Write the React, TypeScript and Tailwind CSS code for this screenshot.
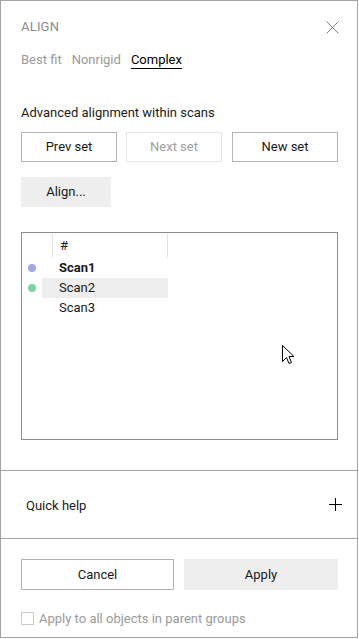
const scans = [
  { name: "Scan1", dot: "bg-[#9fa8e6]", bold: true, selected: false },
  { name: "Scan2", dot: "bg-[#7fd1a6]", bold: false, selected: true },
  { name: "Scan3", dot: "", bold: false, selected: false },
];

function Cursor() {
  return (
    <svg width="13" height="20" viewBox="0 0 13 20" className="absolute left-[260px] top-[112px]">
      <path
        d="M0.5 0.5 L0.5 16.5 L4.5 12.5 L7 18.5 L9.5 17.5 L7 11.5 L12 11.5 Z"
        fill="#fff"
        stroke="#000"
        strokeWidth="1"
        strokeLinejoin="miter"
      />
    </svg>
  );
}

export default function App() {
  return (
    <div className="w-[359px] h-[639px] bg-white font-['Roboto',sans-serif] text-[13px] text-[#1a1a1a]">
      <div className="w-[358px] h-[638px] border border-[#a3a3a3] flex flex-col">
        {/* Main */}
        <div className="h-[469px] px-[20px] flex flex-col">
          <div className="mt-[16px] h-[20px] flex items-center justify-between">
            <span className="text-[#8c8c8c] tracking-[0.2px]">ALIGN</span>
            <svg width="13" height="13" viewBox="0 0 13 13" className="-mr-[2px]">
              <path d="M0.5 0.5 L12.5 12.5 M12.5 0.5 L0.5 12.5" stroke="#808080" strokeWidth="1" />
            </svg>
          </div>

          <div className="mt-[15px] flex gap-[10px] leading-[16px]">
            <span className="text-[#9a9a9a] pb-[1px]">Best fit</span>
            <span className="text-[#9a9a9a] pb-[1px]">Nonrigid</span>
            <span className="text-black border-b border-black">Complex</span>
          </div>

          <div className="mt-[36px] leading-[16px]">Advanced alignment within scans</div>

          <div className="mt-[11px] flex">
            <button className="shrink-0 w-[96px] h-[30px] border border-[#b3b3b3]">Prev set</button>
            <button className="shrink-0 ml-[9px] w-[96px] h-[30px] border border-[#e6e6e6] text-[#a0a0a0]">
              Next set
            </button>
            <button className="shrink-0 ml-[10px] w-[106px] h-[30px] border border-[#b3b3b3]">New set</button>
          </div>

          <button className="mt-[15px] w-[90px] h-[30px] bg-[#eeeeee]">Align...</button>

          <div className="relative shrink-0 mt-[25px] w-[317px] h-[208px] border border-[#8d8d8d]">
            <div className="flex h-[25px]">
              <div className="w-[30px]" />
              <div className="w-[116px] border-l border-r border-[#e3e3e3] mt-[1px] mb-[1px] pl-[7px] flex items-center">
                #
              </div>
            </div>
            {scans.map((s) => (
              <div key={s.name} className="flex items-center h-[20px]">
                <div className="w-[20px] flex justify-center">
                  {s.dot && <span className={`w-[8px] h-[8px] rounded-full ${s.dot}`} />}
                </div>
                <div
                  className={`w-[126px] h-[20px] flex items-center pl-[17px] ${
                    s.selected ? "bg-[#eeeeee]" : ""
                  } ${s.bold ? "font-bold" : ""}`}
                >
                  {s.name}
                </div>
              </div>
            ))}
            <Cursor />
          </div>
        </div>

        {/* Quick help */}
        <div className="h-[69px] border-t border-b border-[#a3a3a3] flex items-center justify-between pl-[25px] pr-[15px] pt-[2px]">
          <span>Quick help</span>
          <svg width="13" height="13" viewBox="0 0 13 13" className="mb-[2px]">
            <path d="M6.5 0 L6.5 13 M0 6.5 L13 6.5" stroke="#000" strokeWidth="1" />
          </svg>
        </div>

        {/* Footer */}
        <div className="px-[20px] flex flex-col">
          <div className="mt-[20px] flex gap-[10px]">
            <button className="shrink-0 w-[153px] h-[31px] border border-[#b3b3b3]">Cancel</button>
            <button className="shrink-0 w-[154px] h-[31px] bg-[#eeeeee]">Apply</button>
          </div>
          <label className="mt-[19px] flex items-center gap-[5px] text-[#9a9a9a]">
            <span className="w-[13px] h-[13px] border border-[#cccccc]" />
            Apply to all objects in parent groups
          </label>
        </div>
      </div>
    </div>
  );
}
